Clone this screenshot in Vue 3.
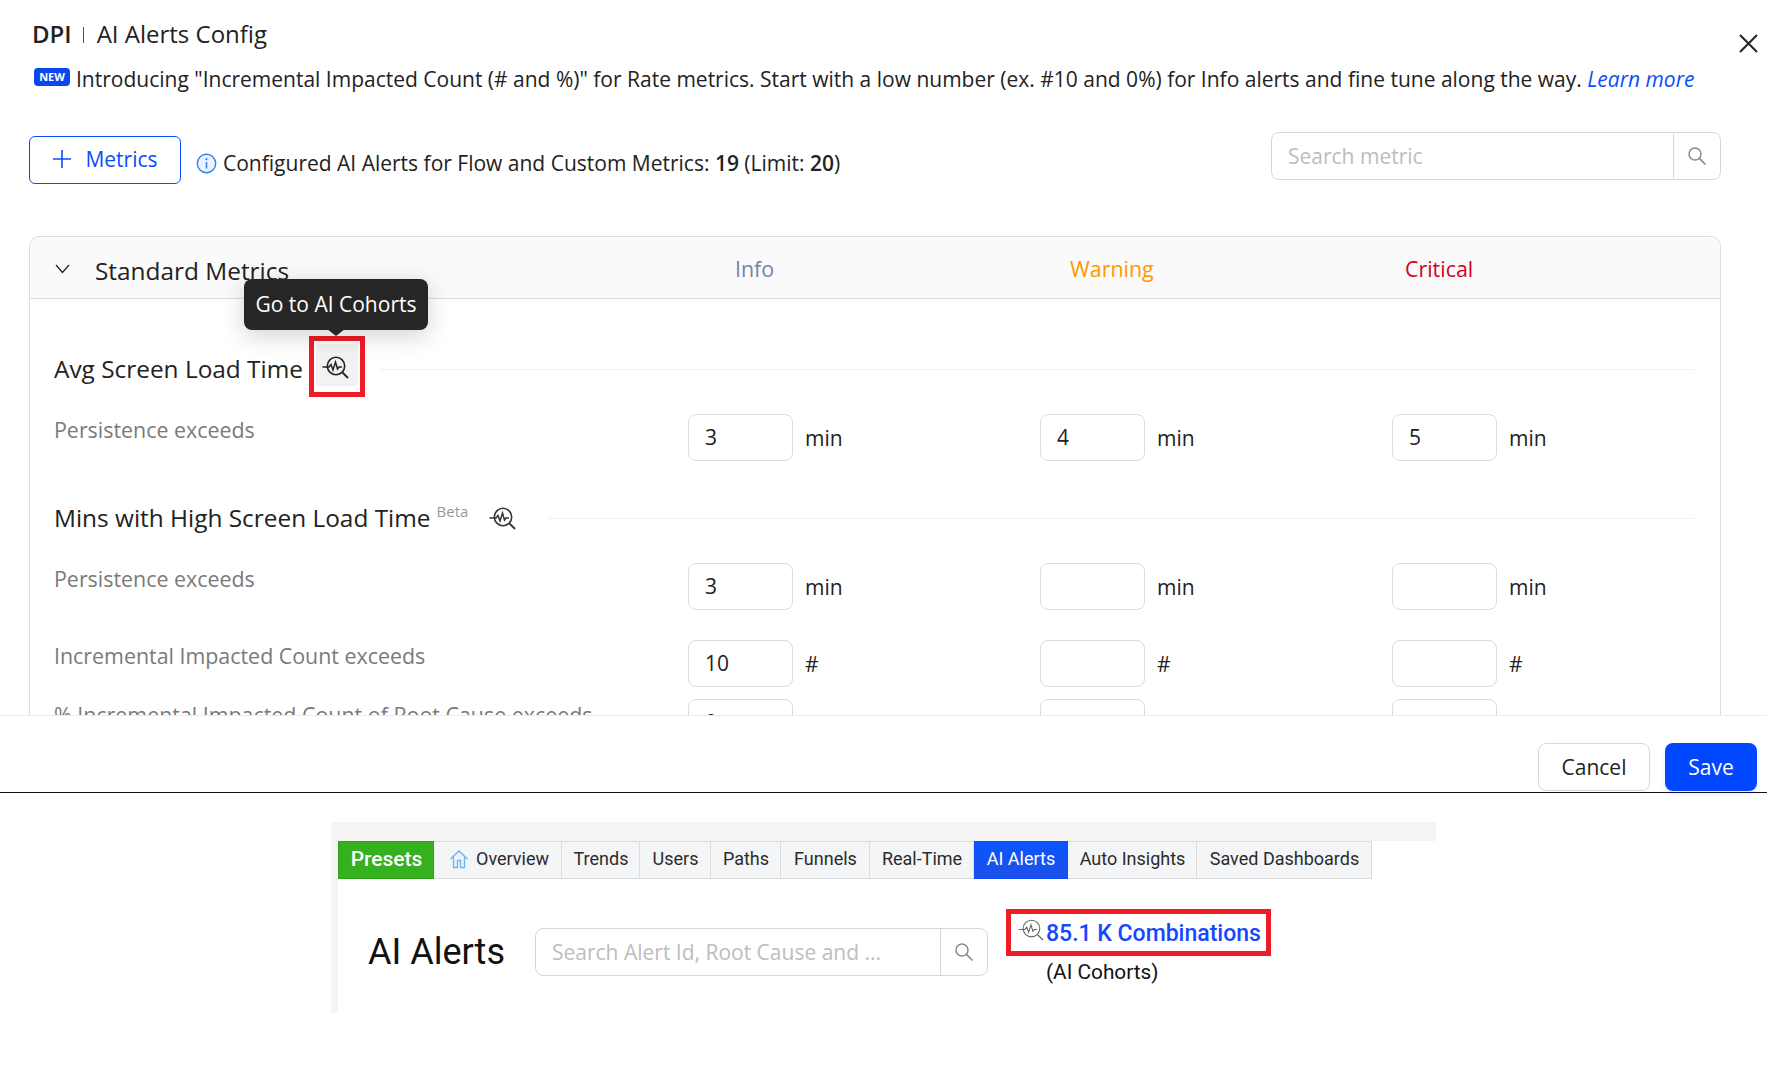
<script setup>
const tabs = [
  { label: 'Overview', w: 128, home: true },
  { label: 'Trends', w: 78 },
  { label: 'Users', w: 71 },
  { label: 'Paths', w: 70 },
  { label: 'Funnels', w: 89 },
  { label: 'Real-Time', w: 104 },
  { label: 'AI Alerts', w: 94, active: true },
  { label: 'Auto Insights', w: 129 },
  { label: 'Saved Dashboards', w: 175 },
]
const sectionTwo = [
  { label: 'Persistence exceeds', values: ['3', '', ''], unit: 'min', cls: 'gap-large' },
  { label: 'Incremental Impacted Count exceeds', values: ['10', '', ''], unit: '#', cls: 'gap-small' },
  { label: '% Incremental Impacted Count of Root Cause exceeds', values: ['0', '', ''], unit: '%', cls: '' },
]
</script>

<template>
  <div class="page">
    <section class="modal">
      <div class="modal-body">
        <div class="title-row">
          <h1 class="title"><b>DPI</b><i class="title-sep"></i>AI Alerts Config</h1>
          <svg class="close" width="19" height="19" viewBox="0 0 19 19"><path d="M1 1l17 17M18 1L1 18" stroke="#222" stroke-width="2" fill="none"/></svg>
        </div>
        <p class="notice"><span class="new">NEW</span>Introducing "Incremental Impacted Count (# and %)" for Rate metrics. Start with a low number (ex. #10 and 0%) for Info alerts and fine tune along the way. <em>Learn more</em></p>
        <div class="toolbar">
          <button class="metrics-btn">
            <svg width="18" height="18" viewBox="0 0 18 18"><path d="M9 0v18M0 9h18" stroke="#0a4dff" stroke-width="1.6"/></svg>
            Metrics
          </button>
          <svg class="info" width="21" height="21" viewBox="0 0 21 21"><circle cx="10.5" cy="10.5" r="9.2" fill="#eaf3ff" stroke="#2f86e6" stroke-width="1.4"/><path d="M10.5 9v6.5" stroke="#2f86e6" stroke-width="1.6"/><circle cx="10.5" cy="6.2" r="1.1" fill="#2f86e6"/></svg>
          <span class="configured">Configured AI Alerts for Flow and Custom Metrics: <b>19</b> (Limit: <b>20</b>)</span>
          <div class="search search-metric">
            <span class="search-text">Search metric</span>
            <span class="search-btn">
              <svg width="20" height="20" viewBox="0 0 20 20"><circle cx="8" cy="8" r="6" fill="none" stroke="#8a8a8a" stroke-width="1.5"/><path d="M12.4 12.4L18.5 18.5" stroke="#8a8a8a" stroke-width="1.7"/></svg>
            </span>
          </div>
        </div>

        <div class="card">
          <div class="card-head">
            <svg class="chev" width="15" height="10" viewBox="0 0 15 10"><path d="M1 1l6.5 7.5L14 1" stroke="#222" stroke-width="1.3" fill="none"/></svg>
            <span class="std">Standard Metrics</span>
            <span class="lv lv-info">Info</span>
            <span class="lv lv-warn">Warning</span>
            <span class="lv lv-crit">Critical</span>
          </div>

          <div class="sec-title first">
            <span class="sec-text">Avg Screen Load Time</span>
            <span class="hl">
              <span class="hl-inner">
                <svg width="27" height="23" viewBox="0 0 27 23"><path d="M0.5 11H7l2-2.5 2 5.5 2.5-8 2 7 1.5-2h3" fill="none" stroke="#222" stroke-width="1.5"/><circle cx="14" cy="10" r="8.7" fill="none" stroke="#222" stroke-width="1.6"/><path d="M20.5 16.5L26 22" stroke="#222" stroke-width="1.8"/></svg>
              </span>
              <span class="tip">Go to AI Cohorts</span>
            </span>
            <i class="rule"></i>
          </div>
          <div class="row">
            <span class="label">Persistence exceeds</span>
            <div v-for="v in ['3','4','5']" :key="v" class="cell"><span class="inp">{{ v }}</span><span class="unit">min</span></div>
          </div>

          <div class="sec-title second">
            <span class="sec-text">Mins with High Screen Load Time</span>
            <sup class="beta">Beta</sup>
            <svg class="sec-ico" width="27" height="23" viewBox="0 0 27 23"><path d="M0.5 11H7l2-2.5 2 5.5 2.5-8 2 7 1.5-2h3" fill="none" stroke="#333" stroke-width="1.5"/><circle cx="14" cy="10" r="8.7" fill="none" stroke="#333" stroke-width="1.6"/><path d="M20.5 16.5L26 22" stroke="#333" stroke-width="1.8"/></svg>
            <i class="rule"></i>
          </div>
          <div v-for="r in sectionTwo" :key="r.label" class="row" :class="r.cls">
            <span class="label">{{ r.label }}</span>
            <div v-for="(v, i) in r.values" :key="i" class="cell"><span class="inp">{{ v }}</span><span class="unit">{{ r.unit }}</span></div>
          </div>
        </div>
      </div>
      <div class="modal-foot">
        <button class="btn-cancel">Cancel</button>
        <button class="btn-save">Save</button>
      </div>
    </section>

    <section class="shot">
      <nav class="tabs">
        <span class="tab presets">Presets</span>
        <span v-for="t in tabs" :key="t.label" class="tab" :class="{ active: t.active }" :style="{ width: t.w + 'px' }">
          <svg v-if="t.home" class="home" width="20" height="20" viewBox="0 0 20 20"><path d="M1.5 10L10 2l8.500 8M4.500 8v10.500h4v-7h3v7h4V8" fill="#e8f3fd" stroke="#6db3ee" stroke-width="1.300"/></svg>
          {{ t.label }}
        </span>
      </nav>
      <div class="alerts-row">
        <h2 class="alerts-title">AI Alerts</h2>
        <div class="search search-alert">
          <span class="search-text">Search Alert Id, Root Cause and ...</span>
          <span class="search-btn">
            <svg width="20" height="20" viewBox="0 0 20 20"><circle cx="8" cy="8" r="6" fill="none" stroke="#8a8a8a" stroke-width="1.5"/><path d="M12.4 12.4L18.5 18.5" stroke="#8a8a8a" stroke-width="1.7"/></svg>
          </span>
        </div>
        <div class="combo">
          <div class="combo-box">
            <svg width="26" height="22" viewBox="0 0 27 23"><path d="M0.500 11H7l2-2.500 2 5.500 2.500-8 2 7 1.500-2h3" fill="none" stroke="#666" stroke-width="1.100"/><circle cx="14" cy="10" r="8.700" fill="none" stroke="#666" stroke-width="1.100"/><path d="M20.500 16.500L26 22" stroke="#666" stroke-width="1.300"/></svg>
            <span class="combo-text">85.1 K Combinations</span>
          </div>
          <div class="combo-sub">(AI Cohorts)</div>
        </div>
      </div>
    </section>
  </div>
</template>

<style>
html, body { margin: 0; background: #fff; }
</style>

<style scoped>
.page { width: 1767px; height: 1070px; overflow: hidden; background: #fff; font-family: "Open Sans", sans-serif; color: #222; }
.modal { height: 793px; box-sizing: border-box; border-bottom: 1px solid #111; }
.modal-body { height: 716px; box-sizing: border-box; padding-top: 19px; overflow: hidden; border-bottom: 1px solid #ececec; }
.title-row { display: flex; justify-content: space-between; align-items: flex-start; padding: 0 9px 0 32px; height: 30px; }
.title { margin: 0; font-size: 24px; font-weight: 400; line-height: 30px; display: flex; align-items: center; }
.title b { font-weight: 600; }
.title-sep { width: 1px; height: 16px; background: #555; margin: 2px 13px 0 11px; }
.close { margin-top: 15px; }
.notice { margin: 15px 0 0 34px; font-size: 21px; line-height: 30px; white-space: nowrap; }
.notice em { color: #0a4dff; }
.new { display: inline-block; vertical-align: 6px; width: 36px; height: 18px; margin-right: 6px; background: #0a47f0; color: #fff; border-radius: 4px; font-size: 11px; font-weight: 700; line-height: 18px; text-align: center; }
.toolbar { display: flex; align-items: flex-start; margin-top: 38px; padding-left: 29px; padding-right: 46px; }
.metrics-btn { margin-top: 4px; width: 152px; height: 48px; box-sizing: border-box; display: flex; align-items: center; justify-content: center; gap: 14px; background: #fff; border: 1px solid #0a4dff; border-radius: 6px; color: #0a4dff; font: 400 21px "Open Sans", sans-serif; padding: 0 0 2px 1px; }
.info { margin: 21px 0 0 15px; }
.configured { margin-top: 16px; margin-left: 6px; font-size: 21px; line-height: 30px; }
.configured b { font-weight: 600; }
.search { display: flex; box-sizing: border-box; height: 48px; border: 1px solid #d8d8d8; border-radius: 8px; background: #fff; }
.search-text { flex: 1; padding-left: 16px; font-family: "Open Sans", sans-serif; font-size: 21px; line-height: 46px; color: #bdbdbd; white-space: nowrap; }
.search-btn { width: 46px; border-left: 1px solid #d8d8d8; display: flex; align-items: center; justify-content: center; }
.search-metric { margin-left: auto; width: 450px; }
.card { margin: 52px 46px 0 29px; border: 1px solid #ddd; border-radius: 10px 10px 0 0; height: 600px; box-sizing: border-box; }
.card-head { height: 62px; box-sizing: border-box; background: #fafafa; border-bottom: 1px solid #ddd; border-radius: 10px 10px 0 0; display: grid; grid-template-columns: 40px 640px 335px 335px 1fr; align-items: center; padding-left: 25px; }
.chev { margin-top: 3px; }
.std { font-size: 24.4px; margin-top: 6px; white-space: nowrap; }
.lv { font-size: 21.4px; margin-top: 2px; }
.lv-info { color: #6f86ab; }
.lv-warn { color: #ff9800; }
.lv-crit { color: #d5001c; }
.sec-title { display: flex; align-items: center; margin-left: 24px; margin-right: 25px; font-size: 24.4px; height: 46px; white-space: nowrap; }
.sec-text { margin-top: -2px; }
.sec-title.first { margin-top: 47px; }
.sec-title.second { margin-top: 34px; }
.rule { flex: 1; height: 1px; background: #f0f0f0; }
.hl { position: relative; display: block; box-sizing: border-box; width: 56px; height: 61px; margin: -5px 16px 0 6px; border: 5px solid #ee1c25; flex: none; }
.hl-inner { display: flex; align-items: center; justify-content: center; margin: 3px 2px 0; height: 42px; background: #f2f2f2; border-radius: 3px; }
.hl-inner svg { margin: 5px 2px 0 0; }
.tip { position: absolute; left: -70px; top: -62px; width: 184px; height: 51px; background: #262626; color: #fff; border-radius: 8px; font-size: 21px; line-height: 51px; text-align: center; box-shadow: 0 6px 24px rgba(0,0,0,.18); }
.tip::after { content: ""; position: absolute; left: 83px; top: 50px; border: 9px solid transparent; border-top: 7px solid #262626; border-bottom: 0; }
.beta { font-size: 15px; color: #999; margin: -14px 0 0 6px; }
.sec-ico { margin: 0 33px 0 21px; }
.row { display: grid; grid-template-columns: 634px 352px 352px 1fr; margin-left: 24px; margin-top: 22px; }
.row.gap-large + .row { margin-top: 30px; }
.row.gap-small + .row { margin-top: 12px; }
.label { font-size: 21.4px; line-height: 32px; color: #7a7a7a; white-space: nowrap; }
.cell { display: flex; align-items: center; gap: 12px; }
.inp { display: block; box-sizing: border-box; width: 105px; height: 47px; padding-left: 16px; border: 1px solid #dcdcdc; border-radius: 8px; font-size: 21px; line-height: 45px; background: #fff; }
.unit { font-size: 21px; margin-top: 1px; }
.modal-foot { display: flex; justify-content: flex-end; align-items: flex-start; gap: 15px; padding: 27px 10px 0 0; }
.btn-cancel, .btn-save { height: 48px; box-sizing: border-box; border-radius: 8px; font: 400 21px "Open Sans", sans-serif; padding: 0 0 1px; }
.btn-cancel { width: 112px; background: #fff; border: 1px solid #d8d8d8; color: #222; }
.btn-save { width: 92px; background: #0047ff; border: 0; color: #fff; box-shadow: 0 3px 4px rgba(0,71,255,.1); }
.shot { margin: 29px 0 0 331px; width: 1105px; height: 191px; box-sizing: border-box; border-top: 19px solid #f4f4f4; border-left: 7px solid #f4f4f4; font-family: Roboto, sans-serif; }
.tabs { display: flex; height: 38px; }
.tab { box-sizing: border-box; display: flex; align-items: center; justify-content: center; gap: 5px; padding: 0 0 3px 1px; background: #f4f5f7; border: 1px solid #dcdcdc; border-left: 0; font-size: 18px; color: #2b2b2b; white-space: nowrap; }
.tab.presets { width: 96px; background: #35b01e; border: 1px solid #2d9f18; color: #fff; font-size: 21px; font-weight: 500; }
.tab.active { background: linear-gradient(#0a55ff, #1e50e8); border-color: #0a4dff; color: #fff; }
.home { margin-right: 2px; margin-left: 2px; }
.alerts-row { display: flex; align-items: flex-start; padding-left: 30px; }
.alerts-title { margin: 49px 0 0; width: 167px; font-size: 36px; font-weight: 400; line-height: 48px; color: #111; }
.search-alert { width: 453px; margin-top: 49px; }
.combo { margin: 30px 0 0 18px; }
.combo-box { box-sizing: border-box; width: 265px; height: 47px; border: 5px solid #ee1c25; display: flex; align-items: center; padding-left: 7px; }
.combo-box svg { margin-bottom: 6px; flex: none; }
.combo-text { margin: 2px 0 0 2px; color: #1448ff; font-size: 23px; font-weight: 500; white-space: nowrap; }
.combo-sub { margin: 1px 0 0 40px; font-size: 20.8px; line-height: 30px; color: #111; }
</style>
